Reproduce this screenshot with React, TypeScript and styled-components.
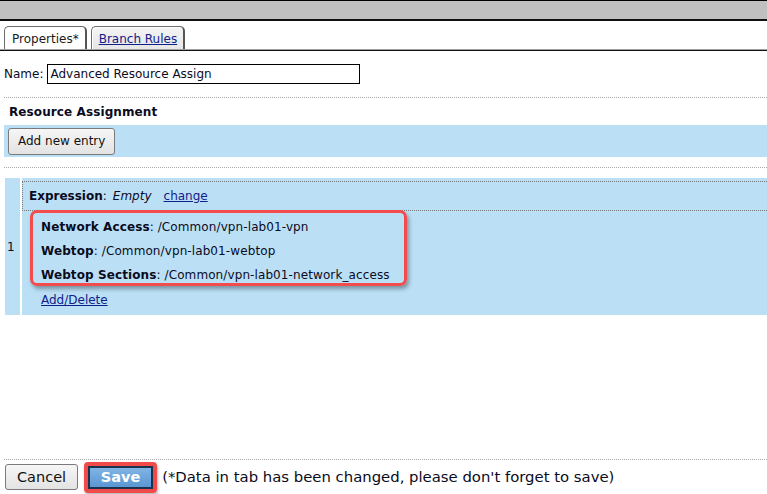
import React from "react";
import styled, { createGlobalStyle } from "styled-components";

const Global = createGlobalStyle`
  html, body { margin: 0; padding: 0; background: #fff; }
  body { font-family: "DejaVu Sans", Verdana, sans-serif; font-size: 12px; color: #0b0b1e; }
  #root { height: 100vh; }
`;

const Page = styled.div`
  height: 494px;
  display: flex;
  flex-direction: column;
  overflow: hidden;
`;

const TopBar = styled.div`
  height: 18px;
  background: #c0c0c0;
  border-top: 1px solid #000;
  border-bottom: 2px solid #111;
`;

const TabStrip = styled.div`
  box-sizing: border-box;
  height: 30px;
  display: flex;
  align-items: flex-end;
  gap: 4px;
  padding: 0 0 1px 4px;
  border-bottom: 1px solid #111;
  box-shadow: inset 0 -1px 0 #a0a0a0;
`;

const Tab = styled.div<{ $active?: boolean }>`
  height: 23px;
  box-sizing: border-box;
  padding: 1px 6px 0 7px;
  display: flex;
  align-items: center;
  border: 1px solid #6d6d6d;
  border-right: 2px solid #555;
  border-bottom: none;
  border-radius: 5px 5px 0 0;
  background: ${(p) => (p.$active ? "#fff" : "linear-gradient(#f4f4f4, #e6e6e6)")};
  box-shadow: inset 1px 1px 0 #fff;
  font-size: 12px;
  color: ${(p) => (p.$active ? "#1a1a1a" : "#10208a")};
  text-decoration: ${(p) => (p.$active ? "none" : "underline")};
`;

const NameRow = styled.div`
  display: flex;
  align-items: center;
  gap: 4px;
  padding: 13px 0 0 4px;
  height: 20px;
`;

const Label = styled.span`
  font-size: 12px;
`;

const NameInput = styled.div`
  width: 313px;
  height: 20px;
  box-sizing: border-box;
  border: 1px solid #000;
  padding: 0 2px;
  display: flex;
  align-items: center;
  font-size: 12px;
`;

const DottedRule = styled.div<{ $mt: number }>`
  margin: ${(p) => p.$mt}px 0 0 4px;
  border-top: 1px dotted #a8a8a8;
`;

const Heading = styled.div`
  font-weight: bold;
  font-size: 12px;
  padding: 6px 0 0 9px;
  height: 21px;
  line-height: 16px;
  letter-spacing: 0.1px;
`;

const BlueBand = styled.div`
  margin-left: 4px;
  background: #bbe0f6;
  height: 32px;
  display: flex;
  align-items: center;
  padding-left: 4px;
`;

const Button = styled.div`
  height: 27px;
  box-sizing: border-box;
  padding: 0 9px;
  display: flex;
  align-items: center;
  border: 1px solid #7a7a7a;
  border-radius: 3px;
  background: linear-gradient(#f6f6f6, #e3e3e3);
  font-size: 12px;
  color: #111;
`;

const Entry = styled.div`
  margin: 10px 0 0 5px;
  background: #bbe0f6;
  display: flex;
  height: 137px;
`;

const IndexCol = styled.div`
  box-sizing: border-box;
  width: 17px;
  border-right: 2px solid #fff;
  display: flex;
  align-items: center;
  padding-left: 2px;
  font-size: 12px;
`;

const EntryBody = styled.div`
  flex: 1;
  padding-top: 3px;
`;

const ExprRow = styled.div`
  height: 30px;
  box-sizing: border-box;
  border: 1px dotted #777;
  border-right: none;
  display: flex;
  align-items: center;
  padding-left: 6px;
`;

const Bold = styled.b`
  font-weight: bold;
`;

const Em = styled.i`
  margin-left: 6px;
`;

const Link = styled.span<{ $ml?: number }>`
  color: #10208a;
  text-decoration: underline;
  margin-left: ${(p) => p.$ml ?? 0}px;
`;

const Highlight = styled.div`
  margin: -1px 0 0 8px;
  width: 377px;
  box-sizing: border-box;
  border: 3px solid #f24c4c;
  border-radius: 7px;
  box-shadow: 2px 3px 4px rgba(0, 0, 0, 0.35);
  padding: 7px 0 0 8px;
  display: flex;
  flex-direction: column;
  gap: 9px;
`;

const Line = styled.div`
  line-height: 15px;
  white-space: nowrap;
  letter-spacing: 0.1px;
`;

const AddDelete = styled.div`
  padding: 7px 0 0 19px;
  line-height: 15px;
`;

const Spacer = styled.div`
  flex: 1;
`;

const Footer = styled.div`
  margin-left: 4px;
  border-top: 1px dotted #a8a8a8;
  display: flex;
  align-items: center;
  gap: 6px;
  height: 34px;
  padding-left: 1px;
`;

const CancelButton = styled(Button)`
  height: 26px;
  padding: 0 11px;
  font-size: 14.5px;
`;

const SaveRing = styled.div`
  border: 4px solid #f04a4a;
  border-radius: 4px;
  box-shadow: 1px 2px 3px rgba(0, 0, 0, 0.3);
  display: flex;
`;

const SaveButton = styled.div`
  width: 65px;
  height: 23px;
  box-sizing: border-box;
  display: flex;
  align-items: center;
  justify-content: center;
  border: 2px solid #18324f;
  background: linear-gradient(#80b4e4, #5a97d3);
  color: #fff;
  font-weight: bold;
  font-size: 14.5px;
`;

const Note = styled.span`
  font-size: 14.85px;
  margin-left: -1px;
`;

export default function App() {
  return (
    <Page>
      <Global />
      <TopBar />
      <TabStrip>
        <Tab $active>Properties*</Tab>
        <Tab>Branch Rules</Tab>
      </TabStrip>
      <NameRow>
        <Label>Name:</Label>
        <NameInput>Advanced Resource Assign</NameInput>
      </NameRow>
      <DottedRule $mt={13} />
      <Heading>Resource Assignment</Heading>
      <BlueBand>
        <Button>Add new entry</Button>
      </BlueBand>
      <DottedRule $mt={10} />
      <Entry>
        <IndexCol>1</IndexCol>
        <EntryBody>
          <ExprRow>
            <Bold>Expression</Bold>:<Em>Empty</Em>
            <Link $ml={12}>change</Link>
          </ExprRow>
          <Highlight>
            <Line>
              <Bold>Network Access</Bold>: /Common/vpn-lab01-vpn
            </Line>
            <Line>
              <Bold>Webtop</Bold>: /Common/vpn-lab01-webtop
            </Line>
            <Line>
              <Bold>Webtop Sections</Bold>: /Common/vpn-lab01-network_access
            </Line>
          </Highlight>
          <AddDelete>
            <Link>Add/Delete</Link>
          </AddDelete>
        </EntryBody>
      </Entry>
      <Spacer />
      <Footer>
        <CancelButton>Cancel</CancelButton>
        <SaveRing>
          <SaveButton>Save</SaveButton>
        </SaveRing>
        <Note>(*Data in tab has been changed, please don't forget to save)</Note>
      </Footer>
    </Page>
  );
}
